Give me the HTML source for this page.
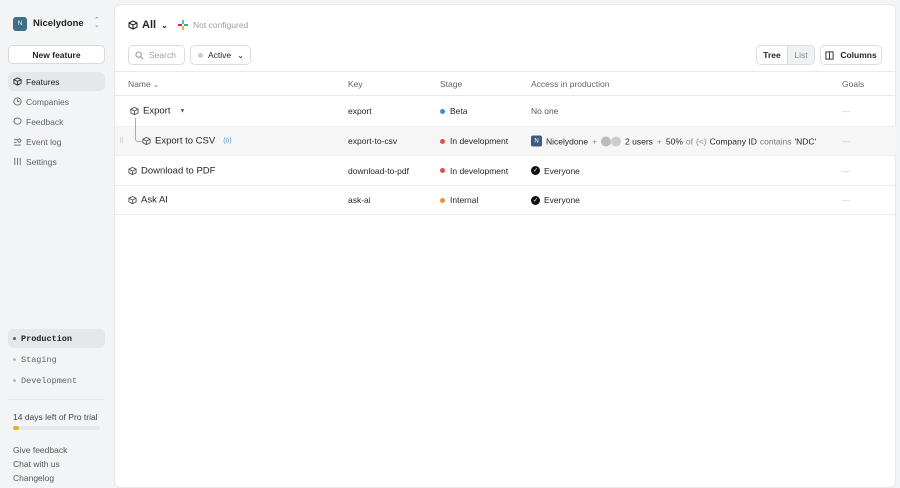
<!DOCTYPE html>
<html><head><style>
*{box-sizing:border-box;margin:0;padding:0}
body{width:900px;height:484px;background:#f3f4f6;font-family:"Liberation Sans",sans-serif;font-size:9px;color:#1f2328;position:relative;overflow:hidden}
.a{position:absolute}
.side-item{position:absolute;left:8px;width:97px;height:19px;border-radius:5px;display:flex;align-items:center;padding-left:5px;color:#5b6270;font-size:8.5px}
.side-item svg{margin-right:4px}
.mono{font-family:"Liberation Mono",monospace;font-size:8.5px}
.main{position:absolute;left:114px;top:4px;width:782px;height:484px;background:#fff;border-radius:6px;border:1px solid #e8e9ec}
.btn{position:absolute;height:20px;border:1px solid #dcdde1;border-radius:5px;background:#fff;display:flex;align-items:center;font-size:8.5px}
.line{position:absolute;left:0;width:782px;height:1px;background:#e8e9ec}
.row{position:absolute;left:0;width:782px;font-size:8.5px}
.t{position:absolute;top:50%;transform:translateY(-50%);display:flex;align-items:center;white-space:nowrap}
.dot{width:5px;height:5px;border-radius:50%;margin-right:5px}
.dash{color:#c8cad0}
</style></head><body>
<div class="a" style="left:13px;top:17px;width:14px;height:14px;border-radius:3px;background:#3f6f86;color:#fff;font-size:6px;display:flex;align-items:center;justify-content:center">N</div>
<div class="a" style="left:33px;top:18px;font-size:9.5px;font-weight:bold;color:#222">Nicelydone</div>
<div class="a" style="left:94px;top:18px;font-size:7px;color:#888;line-height:5px">⌃<br>⌄</div>
<div class="a" style="left:8px;top:45px;width:97px;height:19px;border:1px solid #d8d9dd;border-radius:5px;background:#fff;display:flex;align-items:center;justify-content:center;font-size:8.5px;font-weight:bold">New feature</div>
<div class="side-item" style="top:72px;background:#e6e7ea;color:#222"><svg width="9" height="9" viewBox="0 0 10 10" fill="none" stroke="#333" stroke-width="1.1"><path d="M5 1L9 3v4L5 9 1 7V3z M1 3l4 2 4-2 M5 5v4"/></svg>Features</div>
<div class="side-item" style="top:92px"><svg width="9" height="9" viewBox="0 0 10 10" fill="none" stroke="#666"><circle cx="5" cy="5" r="4"/><path d="M5 2.5V5h2"/></svg>Companies</div>
<div class="side-item" style="top:112px"><svg width="9" height="9" viewBox="0 0 10 10" fill="none" stroke="#666"><ellipse cx="5" cy="4.5" rx="4" ry="3.5"/></svg>Feedback</div>
<div class="side-item" style="top:132px"><svg width="9" height="9" viewBox="0 0 10 10" fill="none" stroke="#666"><path d="M1 3h4M1 6h3M1 9h8"/><circle cx="7" cy="4" r="1.8"/></svg>Event log</div>
<div class="side-item" style="top:152px"><svg width="9" height="9" viewBox="0 0 10 10" fill="none" stroke="#666"><path d="M2 1v8M5 1v8M8 1v8"/></svg>Settings</div>
<div class="side-item mono" style="top:329px;background:#e6e7ea;color:#222;font-weight:bold"><span class="dot" style="width:3px;height:3px;background:#3f6f86;margin-right:5px"></span>Production</div>
<div class="side-item mono" style="top:350px"><span class="dot" style="width:3px;height:3px;background:#bbb;margin-right:5px"></span>Staging</div>
<div class="side-item mono" style="top:371px"><span class="dot" style="width:3px;height:3px;background:#bbb;margin-right:5px"></span>Development</div>
<div class="a" style="left:8px;top:399px;width:97px;height:1px;background:#e6e7ea"></div>
<div class="a" style="left:13px;top:412px;font-size:8.5px;color:#444">14 days left of Pro trial</div>
<div class="a" style="left:13px;top:426px;width:87px;height:4px;border-radius:2px;background:#e6e7ea"><div style="width:6px;height:4px;border-radius:2px;background:#e6b422"></div></div>
<div class="a" style="left:13px;top:443px;font-size:8.5px;color:#555;line-height:14px">Give feedback<br>Chat with us<br>Changelog</div>

<div class="main">
<div class="a" style="left:13px;top:14px;display:flex;align-items:center;font-size:11px;font-weight:bold"><svg width="10" height="10" viewBox="0 0 10 10" fill="none" stroke="#222" stroke-width="1.1" style="margin-right:4px"><path d="M5 1L9 3v4L5 9 1 7V3z M1 3l4 2 4-2 M5 5v4"/></svg>All <span style="font-size:8px;margin-left:5px">⌄</span></div>
<div class="a" style="left:63px;top:15px;display:flex;align-items:center;color:#9a9ea6;font-size:8.5px"><svg width="10" height="10" viewBox="0 0 10 10" style="margin-right:5px"><rect x="4" y="0" width="2" height="4" fill="#36c5f0"/><rect x="6" y="4" width="4" height="2" fill="#2eb67d"/><rect x="4" y="6" width="2" height="4" fill="#ecb22e"/><rect x="0" y="4" width="4" height="2" fill="#e01e5a"/></svg>Not configured</div>
<div class="btn" style="left:13px;top:40px;width:57px;color:#9a9ea6;padding-left:6px"><svg width="9" height="9" viewBox="0 0 10 10" fill="none" stroke="#888" style="margin-right:5px"><circle cx="4" cy="4" r="3"/><path d="M6.5 6.5L9 9"/></svg>Search</div>
<div class="btn" style="left:75px;top:40px;width:61px;padding-left:7px"><span class="dot" style="background:#ccc"></span>Active<span style="margin-left:6px;font-size:8px">⌄</span></div>
<div class="btn" style="left:641px;top:40px;width:59px;padding:0;overflow:hidden;background:#f0f1f3"><div style="width:31px;height:100%;background:#fff;display:flex;align-items:center;justify-content:center;font-weight:bold;border-right:1px solid #dcdde1">Tree</div><div style="flex:1;text-align:center;color:#888">List</div></div>
<div class="btn" style="left:705px;top:40px;width:62px;justify-content:center;font-weight:bold"><svg width="9" height="9" viewBox="0 0 10 10" fill="none" stroke="#222" style="margin-right:6px"><rect x="1" y="1" width="8" height="8"/><path d="M5 1v8"/></svg>Columns</div>
<div class="line" style="top:66px"></div>
<div class="a" style="left:13px;top:74px;color:#666;font-size:8.5px">Name <span style="font-size:7px">⌄</span></div>
<div class="a" style="left:233px;top:74px;color:#666;font-size:8.5px">Key</div>
<div class="a" style="left:325px;top:74px;color:#666;font-size:8.5px">Stage</div>
<div class="a" style="left:416px;top:74px;color:#666;font-size:8.5px">Access in production</div>
<div class="a" style="left:727px;top:74px;color:#666;font-size:8.5px">Goals</div>
<div class="line" style="top:90px"></div>

<div class="row" style="top:91px;height:30px">
<div class="t" style="left:15px;font-size:9.5px"><svg width="9" height="9" viewBox="0 0 10 10" fill="none" stroke="#555" style="margin-right:4px"><path d="M5 1L9 3v4L5 9 1 7V3z M1 3l4 2 4-2 M5 5v4"/></svg>Export<span style="font-size:6px;margin-left:9px;color:#555">▼</span></div>
<div class="t" style="left:233px">export</div>
<div class="t" style="left:325px"><span class="dot" style="background:#3a8fd6"></span>Beta</div>
<div class="t" style="left:416px;color:#555">No one</div>
<div class="t dash" style="left:727px">—</div>
</div>
<div class="row" style="top:121px;height:30px;background:#f6f6f7;border-top:1px solid #eee;border-bottom:1px solid #eee">
<div class="t" style="left:4px;color:#bbb;font-size:7px">⠿</div>
<div class="t" style="left:27px;font-size:9.5px"><svg width="9" height="9" viewBox="0 0 10 10" fill="none" stroke="#555" style="margin-right:4px"><path d="M5 1L9 3v4L5 9 1 7V3z M1 3l4 2 4-2 M5 5v4"/></svg>Export to CSV<span style="color:#5b9bd5;font-size:7px;margin-left:8px">(o)</span></div>
<div class="t" style="left:233px">export-to-csv</div>
<div class="t" style="left:325px"><span class="dot" style="background:#d9534f"></span>In development</div>
<div class="t" style="left:416px"><span style="width:11px;height:11px;background:#3d5a80;color:#fff;font-size:6px;border-radius:2px;display:inline-flex;align-items:center;justify-content:center;margin-right:4px">N</span>Nicelydone <span style="color:#888;margin:0 4px">+</span><span style="width:10px;height:10px;border-radius:50%;background:#bbb"></span><span style="width:10px;height:10px;border-radius:50%;background:#ccc;margin-right:4px"></span>2 users <span style="color:#888;margin:0 4px">+</span>50% <span style="color:#888;margin:0 3px">of</span><span style="color:#888;margin-right:3px">(&lt;)</span>Company ID <span style="color:#777;margin:0 3px">contains</span>'NDC'</div>
<div class="t dash" style="left:727px">—</div>
</div>
<div class="a" style="left:20px;top:113px;width:7px;height:24px;border-left:1px solid #aaa;border-bottom:1px solid #aaa;border-bottom-left-radius:3px;z-index:2"></div>
<div class="row" style="top:151px;height:30px;border-bottom:1px solid #eee">
<div class="t" style="left:13px;font-size:9.5px"><svg width="9" height="9" viewBox="0 0 10 10" fill="none" stroke="#555" style="margin-right:4px"><path d="M5 1L9 3v4L5 9 1 7V3z M1 3l4 2 4-2 M5 5v4"/></svg>Download to PDF</div>
<div class="t" style="left:233px">download-to-pdf</div>
<div class="t" style="left:325px"><span class="dot" style="background:#d9534f"></span>In development</div>
<div class="t" style="left:416px"><span style="width:9px;height:9px;border-radius:50%;background:#111;color:#fff;font-size:6px;display:inline-flex;align-items:center;justify-content:center;margin-right:4px">✓</span>Everyone</div>
<div class="t dash" style="left:727px">—</div>
</div>
<div class="row" style="top:181px;height:29px;border-bottom:1px solid #eee">
<div class="t" style="left:13px;font-size:9.5px"><svg width="9" height="9" viewBox="0 0 10 10" fill="none" stroke="#555" style="margin-right:4px"><path d="M5 1L9 3v4L5 9 1 7V3z M1 3l4 2 4-2 M5 5v4"/></svg>Ask AI</div>
<div class="t" style="left:233px">ask-ai</div>
<div class="t" style="left:325px"><span class="dot" style="background:#e8913a"></span>Internal</div>
<div class="t" style="left:416px"><span style="width:9px;height:9px;border-radius:50%;background:#111;color:#fff;font-size:6px;display:inline-flex;align-items:center;justify-content:center;margin-right:4px">✓</span>Everyone</div>
<div class="t dash" style="left:727px">—</div>
</div>
</div>
</body></html>
